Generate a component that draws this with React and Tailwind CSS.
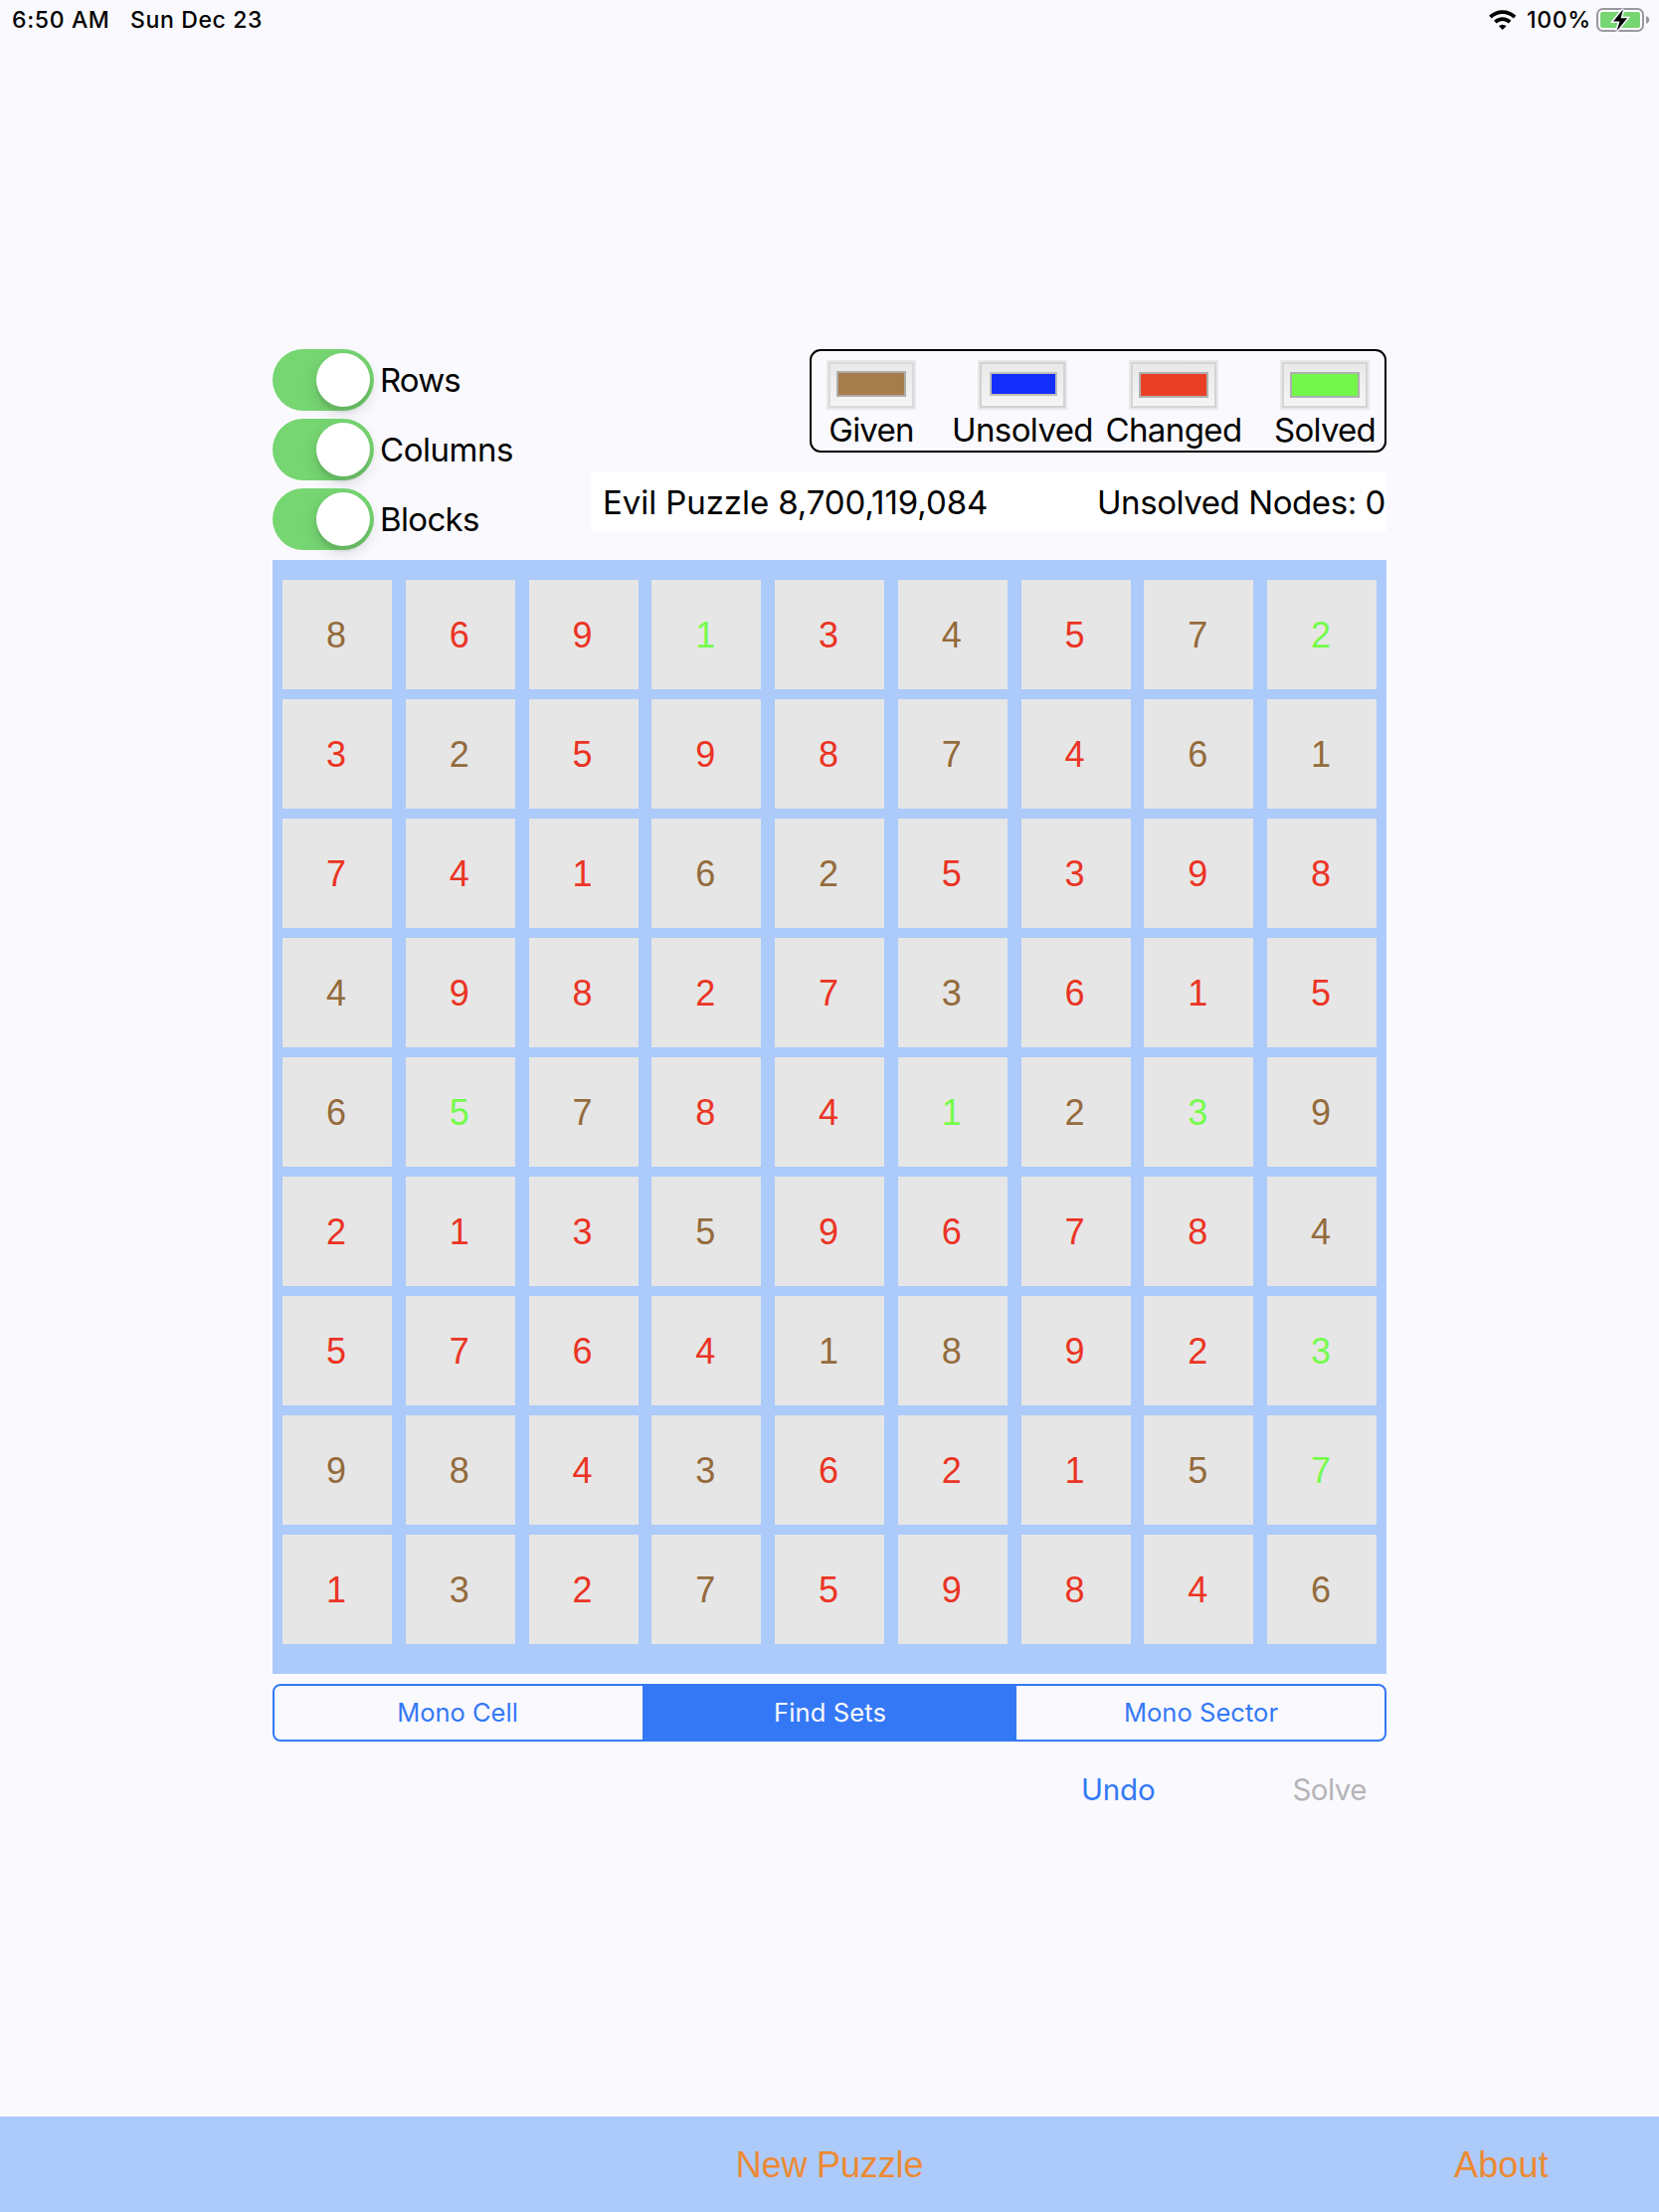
import React from "react";

const TOGGLES = [
  { label: "Rows", cls: "tracking-[-0.9px]" },
  { label: "Columns", cls: "tracking-[-0.45px]" },
  { label: "Blocks", cls: "tracking-[-0.65px]" },
];

const LEGEND = [
  { label: "Given", text: "tracking-[-0.8px]", swatch: "ml-[6px] mt-[7px] w-[70px] h-[26px] bg-[#a57c4b] border-[#b0aca8]", frame: "border-[#dadada]" },
  { label: "Unsolved", text: "tracking-[-0.6px]", swatch: "ml-[8px] mt-[8px] w-[68px] h-[24px] bg-[#142ffb] border-[#c0c0bc]", frame: "border-[#d2d2d2]" },
  { label: "Changed", text: "tracking-[-0.6px]", swatch: "ml-[6px] mt-[8px] w-[70px] h-[26px] bg-[#e94025] border-[#b0b0b0]", frame: "border-[#d4d4d4]" },
  { label: "Solved", text: "tracking-[-0.75px]", swatch: "ml-[6px] mt-[8px] w-[70px] h-[26px] bg-[#73f74a] border-[#b0b0b0]", frame: "border-[#d4d4d4]" },
];

/* Each cell is a digit followed by its state: g(iven), c(hanged), s(olved) */
const BOARD = [
  "8g 6c 9c 1s 3c 4g 5c 7g 2s",
  "3c 2g 5c 9c 8c 7g 4c 6g 1g",
  "7c 4c 1c 6g 2g 5c 3c 9c 8c",
  "4g 9c 8c 2c 7c 3g 6c 1c 5c",
  "6g 5s 7g 8c 4c 1s 2g 3s 9g",
  "2c 1c 3c 5g 9c 6c 7c 8c 4g",
  "5c 7c 6c 4c 1g 8g 9c 2c 3s",
  "9g 8g 4c 3g 6c 2c 1c 5g 7s",
  "1c 3g 2c 7g 5c 9c 8c 4c 6g",
].map((row) => row.split(" "));

const STATE = {
  g: "text-[#946b3c]",
  c: "text-[#eb3424]",
  s: "text-[#75fb4c]",
};

function Wifi() {
  return (
    <svg width="28" height="20" viewBox="0 0 28 20" className="block" fill="none" stroke="#000">
      <path d="M1.4 7.2A17.4 17.4 0 0 1 26 7.2" strokeWidth="3.8" />
      <path d="M6.35 12.15A10.4 10.4 0 0 1 21.05 12.15" strokeWidth="3.7" />
      <path d="M13.7 20L9.9 16.2A5.4 5.4 0 0 1 17.5 16.2Z" fill="#000" stroke="none" />
    </svg>
  );
}

function Battery() {
  return (
    <svg width="54" height="26" viewBox="0 -1 54 26" className="block">
      <rect x="1" y="1" width="46" height="22" rx="5.5" fill="none" stroke="#98989d" strokeWidth="2" />
      <rect x="4" y="4" width="40" height="16" rx="2.5" fill="#76d672" />
      <path d="M50 8c2 .8 3.3 2.2 3.3 4s-1.3 3.2-3.3 4z" fill="#98989d" />
      <path
        d="M27 1.3L17 13.5H23.5L20.5 23.2L31 10.2H24.6Z"
        fill="#000"
        stroke="#fafafe"
        strokeWidth="3"
        paintOrder="stroke"
      />
    </svg>
  );
}

function Toggle({ label, cls }) {
  return (
    <div className="flex h-[62px] items-center">
      <div className="flex h-[62px] w-[102px] items-center justify-end rounded-full bg-[#76d672] pr-1">
        <div className="h-[54px] w-[54px] rounded-full bg-white shadow-[0_6px_16px_rgba(0,0,0,0.15),0_6px_2px_rgba(0,0,0,0.06)]" />
      </div>
      <span className={"ml-[6px] " + cls}>{label}</span>
    </div>
  );
}

export default function App() {
  return (
    <div className="flex h-[2224px] w-[1668px] flex-col bg-[#fafafe] font-[Inter,sans-serif] text-black">
      <header className="flex h-10 items-center pl-3 pr-[9px] text-[23px] font-medium leading-[40px]">
        <span className="w-[119px] whitespace-nowrap tracking-[0.65px]">6:50 AM</span>
        <span className="whitespace-nowrap tracking-[0.63px]">Sun Dec 23</span>
        <div className="ml-auto flex items-center">
          <Wifi />
          <span className="ml-[10px] w-[70px] tracking-[0.7px]">100%</span>
          <Battery />
        </div>
      </header>

      <main className="mx-auto mt-[311px] flex w-[1120px] flex-col text-[33px] leading-[40px]">
        <div className="flex">
          <div className="flex w-[320px] flex-col gap-2">
            {TOGGLES.map((t) => (
              <Toggle key={t.label} {...t} />
            ))}
          </div>
          <div className="flex w-[800px] flex-col items-end">
            <div className="flex h-[104px] w-[580px] gap-[62px] rounded-[11px] border-2 border-black pl-[15px] pt-[9px]">
              {LEGEND.map((item) => (
                <div key={item.label} className="flex w-[90px] shrink-0 flex-col items-center">
                  <div className="h-[50px] w-[90px] border-2 border-[#e8e8e8]">
                    <div className={"h-full w-full border-2 bg-linear-to-b from-[#e9e9e9] to-[#f5f5f5] " + item.frame}>
                      <div className={"border-2 " + item.swatch} />
                    </div>
                  </div>
                  <span className={"whitespace-nowrap " + item.text}>{item.label}</span>
                </div>
              ))}
            </div>
            <div className="mt-5 flex h-[60px] w-full items-center justify-between bg-white pl-3 pr-px">
              <span className="tracking-[-0.08px]">Evil Puzzle 8,700,119,084</span>
              <span className="tracking-[-0.42px]">Unsolved Nodes: 0</span>
            </div>
          </div>
        </div>

        <div className="mt-[10px] grid h-[1120px] grid-cols-[repeat(9,110px)] content-start justify-between gap-y-[10px] bg-[#accafa] px-[10px] pt-5">
          {BOARD.flat().map((cell, i) => (
            <div
              key={i}
              className={
                "flex h-[110px] items-center justify-center bg-[#e6e6e6] pt-[2px] pr-[2px] font-['Liberation_Sans',sans-serif] text-[36px] leading-[42px] " +
                STATE[cell[1]]
              }
            >
              {cell[0]}
            </div>
          ))}
        </div>

        <div className="mt-[10px] flex h-[58px] overflow-hidden rounded-[8px] border-2 border-[#3478f6] text-[25.5px] text-[#3478f6]">
          <div className="flex w-[370px] items-center justify-center pr-[2px]">Mono Cell</div>
          <div className="flex w-[376px] items-center justify-center bg-[#3478f6] pl-px tracking-[0.12px] text-[#fafafe]">Find Sets</div>
          <div className="flex w-[370px] items-center justify-center pl-px tracking-[0.05px]">Mono Sector</div>
        </div>

        <div className="mt-7 flex justify-end gap-[138px] pr-5 text-[29.5px]">
          <span className="tracking-[-0.2px] text-[#3478f6]">Undo</span>
          <span className="tracking-[-0.5px] text-[#b4b4b8]">Solve</span>
        </div>
      </main>

      <footer className="mt-auto grid h-24 grid-cols-3 items-center bg-[#accafa] pt-[2px] font-['Liberation_Sans',sans-serif] text-[36px] leading-[42px] text-[#ec8a33]">
        <span className="col-start-2 text-center tracking-[-0.15px]">New Puzzle</span>
        <span className="pr-[111px] text-right tracking-[0.2px]">About</span>
      </footer>
    </div>
  );
}
